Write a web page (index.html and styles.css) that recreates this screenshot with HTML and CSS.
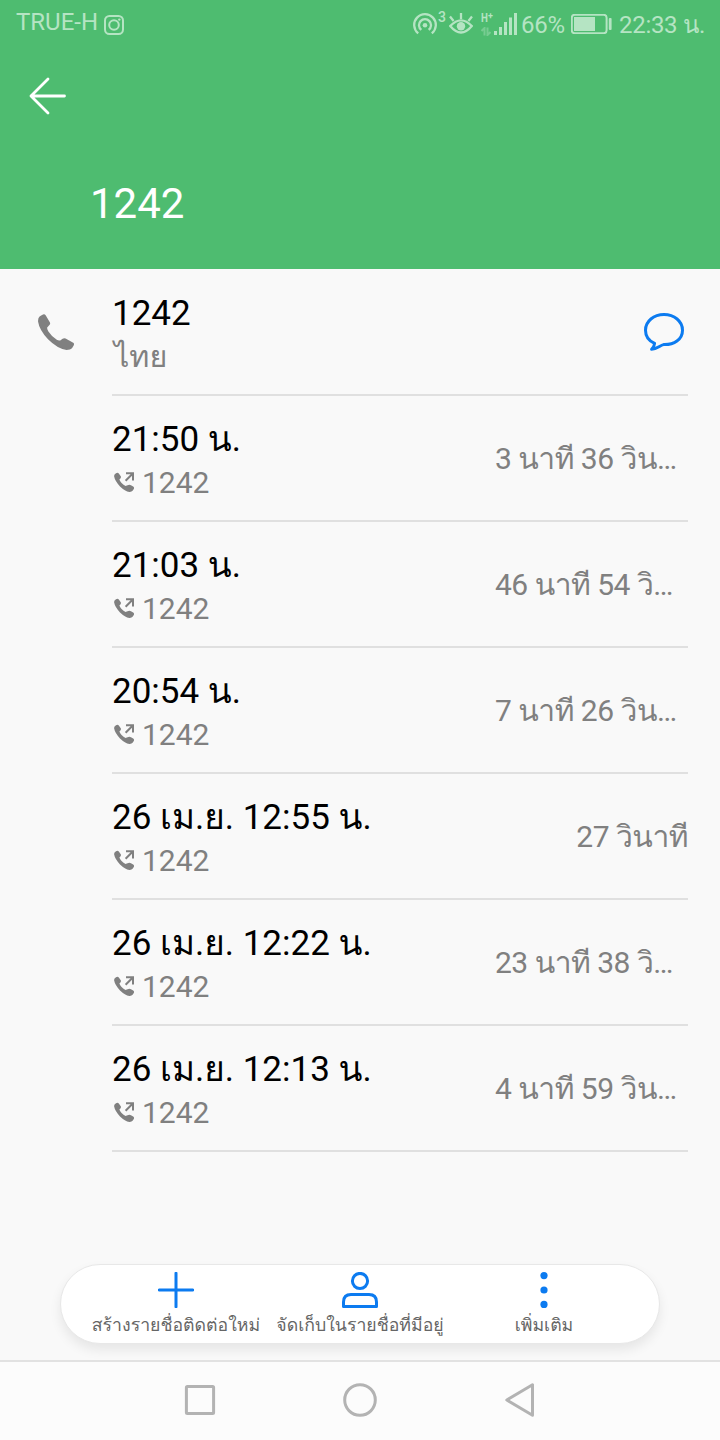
FILE: index.html
```html
<!DOCTYPE html>
<html lang="th">
<head>
    <meta charset="UTF-8">
    <meta name="viewport" content="width=device-width, initial-scale=1.0">
    <title>1242</title>
    <link rel="stylesheet" href="styles.css">
</head>
<body>
    <svg class="defs" width="0" height="0">
        <symbol id="phone" viewBox="0 0 36 36">
            <path d="M1.6 2.6Q3 1.2 5 .4Q6.6-.4 7.8 1.4L11.8 8.2Q12.6 9.6 11.6 10.8L9.2 13.4Q8.8 15 10.4 17.4Q14 22.8 18.8 25.8Q20.8 27 22.2 26.4L24.6 24.8Q26 23.8 27.6 24.6L34.8 28.4Q36.6 29.4 35.8 31.2L34 34.2Q32.6 36 28.5 36Q19.5 34.8 10 25.3Q1.3 16 .1 7.8Q-.2 4.2 1.6 2.6Z"/>
        </symbol>
        <symbol id="outgoing" viewBox="0 0 20 20">
            <path d="M2 1.2Q3.7 0 4.8 1.4L6.6 4Q7.4 5.2 6.4 6.4L5.4 7.6Q6 9.2 7.6 11Q9.5 13 11.6 14L12.8 13.6L14.4 12.9Q15.8 12.4 17 13.2L19.2 14.6Q20.6 15.6 19.8 17L18.6 18.8Q17.6 20 15.4 19.9Q11 19.2 6 14.4Q.9 9 .1 4.3Q-.1 2.4 2 1.2Z"/>
            <path d="M12 1.3H19V8.4M18.8 1.5L11.6 8.8" fill="none" stroke="currentColor" stroke-width="2"/>
        </symbol>
    </svg>

    <div class="header">
        <div class="status-bar">
            <span class="carrier">TRUE-H</span>
            <svg class="insta" width="20" height="20" viewBox="0 0 20 20">
                <rect x="1" y="1" width="18" height="18" rx="4.5"/>
                <circle cx="10" cy="10" r="4.8"/>
                <circle cx="15.3" cy="4.6" r="1.2" class="solid"/>
            </svg>
            <div class="status-right">
                <svg class="hotspot" width="24" height="22" viewBox="0 0 24 22">
                    <path d="M5.2 20.4A10.8 10.8 0 1 1 18.8 20.4M8.3 16.9A6 6 0 1 1 15.7 16.9"/>
                    <circle cx="12" cy="12.2" r="2.3" class="solid"/>
                </svg>
                <span class="count">3</span>
                <svg class="eye" width="24" height="22" viewBox="0 0 24 22">
                    <path d="M1.2 13Q12 1.6 22.8 13Q12 26 1.2 13ZM12 6V0M4.6 8L1 3.6M19.4 8L23 3.6"/>
                    <circle cx="12" cy="13.2" r="4.2" class="solid"/>
                </svg>
                <div class="network">
                    <span>H</span><sup>+</sup>
                    <svg width="10" height="9" viewBox="0 0 10 9"><path d="M.5 4L3.5 1V8.5M6.5 .5V8L9.5 5"/></svg>
                </div>
                <svg class="signal" width="23" height="22" viewBox="0 0 23 22">
                    <path d="M1.5 18V22M6.5 14V22M11.5 9V22M16.5 4.5V22M21.5 0V22"/>
                </svg>
                <span class="percent">66%</span>
                <svg class="battery" width="41" height="20" viewBox="0 0 41 20">
                    <rect x=".8" y=".8" width="34.8" height="18.4" rx="3"/>
                    <rect x="3" y="3" width="21" height="14" class="solid"/>
                    <rect x="37.8" y="4" width="2.8" height="12" rx="1" class="solid"/>
                </svg>
                <span class="clock">22:33 น.</span>
            </div>
        </div>
        <svg class="back" width="38" height="38" viewBox="0 0 38 38">
            <path d="M19 2L2 19L19 36M2 19H35.5"/>
        </svg>
        <h1>1242</h1>
    </div>

    <div class="content">
        <div class="contact">
            <svg class="call" width="36" height="36"><use href="#phone"/></svg>
            <div class="row">
                <div class="info">
                    <p class="title">1242</p>
                    <p class="sub country">ไทย</p>
                </div>
                <svg class="message" width="42" height="40" viewBox="0 0 42 40">
                    <path d="M11.6 31.4C5.3 28.6 2.5 23.8 2.5 18.2C2.5 9.2 10.8 2.5 21 2.5S39.5 9.2 39.5 18.2C39.5 27.5 31 33 20.5 32.6C17 33.3 14.5 36.8 8.6 37.3C10.6 35.3 11.4 33.4 11.6 31.4Z"/>
                </svg>
            </div>
        </div>
        <div class="row">
            <div class="info">
                <p class="title">21:50 น.</p>
                <p class="sub"><svg width="20" height="20"><use href="#outgoing"/></svg>1242</p>
            </div>
            <span class="duration long">3 นาที 36 วิน…</span>
        </div>
        <div class="row">
            <div class="info">
                <p class="title">21:03 น.</p>
                <p class="sub"><svg width="20" height="20"><use href="#outgoing"/></svg>1242</p>
            </div>
            <span class="duration long">46 นาที 54 วิ…</span>
        </div>
        <div class="row">
            <div class="info">
                <p class="title">20:54 น.</p>
                <p class="sub"><svg width="20" height="20"><use href="#outgoing"/></svg>1242</p>
            </div>
            <span class="duration long">7 นาที 26 วิน…</span>
        </div>
        <div class="row">
            <div class="info">
                <p class="title">26 เม.ย. 12:55 น.</p>
                <p class="sub"><svg width="20" height="20"><use href="#outgoing"/></svg>1242</p>
            </div>
            <span class="duration">27 วินาที</span>
        </div>
        <div class="row">
            <div class="info">
                <p class="title">26 เม.ย. 12:22 น.</p>
                <p class="sub"><svg width="20" height="20"><use href="#outgoing"/></svg>1242</p>
            </div>
            <span class="duration long">23 นาที 38 วิ…</span>
        </div>
        <div class="row">
            <div class="info">
                <p class="title">26 เม.ย. 12:13 น.</p>
                <p class="sub"><svg width="20" height="20"><use href="#outgoing"/></svg>1242</p>
            </div>
            <span class="duration long">4 นาที 59 วิน…</span>
        </div>
    </div>

    <div class="toolbar">
        <div class="tool">
            <svg width="36" height="36" viewBox="0 0 36 36"><path d="M18 1.2V34.8M1.2 18H34.8"/></svg>
            <span>สร้างรายชื่อติดต่อใหม่</span>
        </div>
        <div class="tool">
            <svg width="36" height="36" viewBox="0 0 36 36">
                <circle cx="18" cy="9" r="7.6"/>
                <path d="M1.5 34.5V30Q1.5 22.5 9 22.5H27Q34.5 22.5 34.5 30V34.5Z"/>
            </svg>
            <span>จัดเก็บในรายชื่อที่มีอยู่</span>
        </div>
        <div class="tool">
            <svg width="36" height="36" viewBox="0 0 36 36">
                <g class="dots"><circle cx="18" cy="3.6" r="3.6"/><circle cx="18" cy="18" r="3.6"/><circle cx="18" cy="32.4" r="3.6"/></g>
            </svg>
            <span>เพิ่มเติม</span>
        </div>
    </div>

    <div class="nav-bar">
        <svg width="34" height="34" viewBox="0 0 34 34"><rect x="3.4" y="3.4" width="27.2" height="27.2" rx="1"/></svg>
        <svg width="34" height="34" viewBox="0 0 34 34"><circle cx="17" cy="17" r="15.3"/></svg>
        <svg width="34" height="34" viewBox="0 0 34 34"><path d="M3.8 17L29.5 1.8V32.2Z"/></svg>
    </div>
</body>
</html>
```
FILE: styles.css
```css
* {
    margin: 0;
    padding: 0;
    box-sizing: border-box;
}

body {
    width: 720px;
    height: 1440px;
    display: flex;
    flex-direction: column;
    background-color: #f9f9f9;
    font-family: Roboto, Loma, 'Noto Sans', sans-serif;
    overflow: hidden;
}

svg {
    display: block;
    flex-shrink: 0;
    fill: currentColor;
}

.defs {
    position: absolute;
}

.header {
    height: 269px;
    background-color: #4ebc70;
    color: #fff;
}

.status-bar {
    height: 48px;
    display: flex;
    padding: 0 16px;
    color: #b5e4c3;
    font-size: 24px;
    line-height: 28px;
    white-space: nowrap;
}

.status-bar svg {
    fill: none;
    stroke: currentColor;
    stroke-width: 2;
}

.status-bar .solid {
    fill: currentColor;
    stroke: none;
}

.carrier {
    width: 83px;
    margin-top: 8px;
}

.insta {
    margin: 15px 0 0 5px;
}

.status-right {
    display: flex;
    margin-left: auto;
}

.hotspot {
    margin-top: 13px;
}

.status-bar .hotspot,
.status-bar .eye {
    stroke-width: 2.3;
}

.count {
    width: 12px;
    font-size: 14px;
    font-weight: 500;
    line-height: 16px;
    margin-top: 9px;
    padding-left: 1px;
}

.eye {
    margin-top: 13px;
}

.network {
    width: 13px;
    margin: 12px 0 0 8px;
    font-size: 13px;
    line-height: 12px;
    font-weight: 700;
}

.network span {
    display: inline-block;
    width: 7px;
    transform: scaleX(0.75);
    transform-origin: left;
}

.network sup {
    display: inline-block;
    vertical-align: 3px;
    font-size: 9px;
    line-height: 8px;
}

.network svg {
    opacity: 0.4;
    margin-top: 3px;
}

.status-bar .signal {
    margin-top: 13px;
    stroke-width: 3;
}

.percent {
    margin: 11px 0 0 4px;
    width: 43px;
    letter-spacing: -0.3px;
}

.battery {
    margin: 14px 0 0 7px;
}

.clock {
    margin: 11px 0 0 7px;
    width: 85px;
    letter-spacing: -0.3px;
}

.back {
    margin: 29px 0 0 29px;
    fill: none;
    stroke: #fff;
    stroke-width: 2.8;
    stroke-linecap: round;
    stroke-linejoin: round;
}

h1 {
    margin: 64px 0 0 90px;
    font-size: 42px;
    font-weight: 400;
    line-height: 50px;
}

.content {
    padding: 1px 32px 0 0;
}

.row {
    height: 126px;
    margin-left: 112px;
    display: flex;
    align-items: center;
    justify-content: space-between;
    border-bottom: 2px solid #e0e0e0;
}

.contact {
    display: flex;
    align-items: center;
}

.contact .row {
    flex: 1;
    margin-left: 0;
}

.call {
    margin: 0 38px 2px;
    color: #808080;
}

.message {
    margin-right: 3px;
    fill: none;
    stroke: #0c7bf0;
    stroke-width: 3;
    stroke-linejoin: round;
}

.info {
    padding-top: 5px;
    white-space: nowrap;
}

.title {
    height: 45px;
    font-size: 35px;
    line-height: 45px;
    color: #000;
}

.sub {
    display: flex;
    align-items: center;
    gap: 8px;
    height: 42px;
    font-size: 30px;
    line-height: 42px;
    color: #808080;
}

.sub svg {
    margin: 0 0 2px 2px;
}

.country {
    padding-left: 2px;
    font-size: 30.5px;
}

.duration {
    padding-top: 2px;
    font-size: 30px;
    line-height: 42px;
    letter-spacing: -0.5px;
    color: #808080;
    white-space: nowrap;
}

.long {
    width: 193px;
}

.toolbar {
    width: 600px;
    height: 80px;
    margin: 112px auto 16px;
    padding: 7px 23px 0;
    display: grid;
    grid-template-columns: repeat(3, 184px);
    background-color: #fff;
    border: 1px solid #e8e8e8;
    border-radius: 40px;
    box-shadow: 0 6px 12px rgba(0, 0, 0, 0.08);
}

.tool {
    display: flex;
    flex-direction: column;
    align-items: center;
    font-size: 17.7px;
    line-height: 24px;
    color: #666;
    white-space: nowrap;
}

.tool svg {
    fill: none;
    stroke: #0c7bf0;
    stroke-width: 3;
    stroke-linecap: round;
    stroke-linejoin: round;
    margin-bottom: 5px;
}

.tool .dots {
    fill: #0c7bf0;
    stroke: none;
}

.nav-bar {
    flex: 1;
    display: flex;
    align-items: center;
    justify-content: center;
    gap: 126px;
    padding-bottom: 2px;
    background-color: #fcfcfc;
    border-top: 2px solid #e2e2e2;
}

.nav-bar svg {
    fill: none;
    stroke: #b3b3b3;
    stroke-width: 3;
    stroke-linejoin: round;
}
```
